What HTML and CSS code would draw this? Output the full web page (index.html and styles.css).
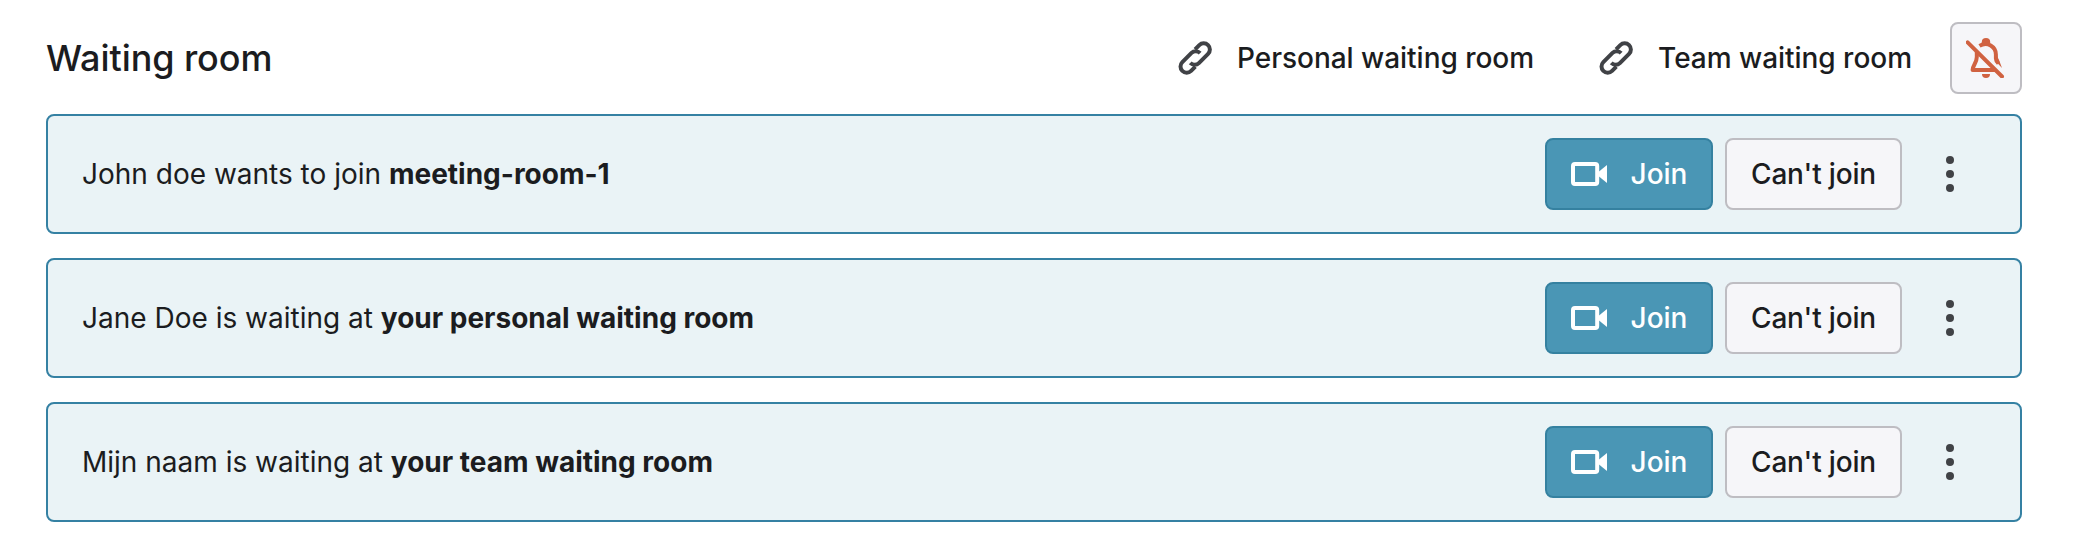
FILE: index.html
```html
<!DOCTYPE html>
<html lang="en">
<head>
  <meta charset="UTF-8">
  <meta name="viewport" content="width=device-width, initial-scale=1.0">
  <title>Waiting room</title>
  <link rel="stylesheet" href="styles.css">
</head>
<body>
  <!-- shared icons -->
  <svg class="sprite" width="0" height="0">
    <symbol id="link" viewBox="0 0 36 36">
      <g transform="translate(18.2 18) rotate(-45)" fill="none" stroke="currentColor" stroke-width="4">
        <path d="M6 -6.2H12A6.2 6.2 0 0 1 12 6.2H-1A6 6.2 0 0 1 -7 0"/>
        <path d="M-6 6.2H-12A6.2 6.2 0 0 1 -12 -6.2H1A6 6.2 0 0 1 7 0"/>
      </g>
    </symbol>
    <symbol id="video" viewBox="0 0 36 36">
      <rect x="2" y="8" width="24.2" height="20" rx="2" fill="none" stroke="currentColor" stroke-width="4"/>
      <path d="M28 15.5L36 9V27L28 20.5Z" fill="currentColor"/>
    </symbol>
    <symbol id="dots" viewBox="0 0 36 36">
      <circle cx="18" cy="4" r="4"/>
      <circle cx="18" cy="18" r="4"/>
      <circle cx="18" cy="32" r="4"/>
    </symbol>
  </svg>

  <header class="header">
    <h1>Waiting room</h1>
    <div class="actions">
      <button class="btn btn-plain"><svg class="icon icon-dark"><use href="#link"/></svg><span>Personal waiting room</span></button>
      <button class="btn btn-plain"><svg class="icon icon-dark"><use href="#link"/></svg><span>Team waiting room</span></button>
      <button class="btn btn-default btn-square" aria-label="Notifications off">
        <svg class="bell" viewBox="0 0 40 40">
          <path d="M10.8 14V19C10.8 25 6.6 27.5 6.6 31.9H30" fill="none" stroke="currentColor" stroke-width="4" stroke-linejoin="round"/>
          <path d="M13.5 7.9C21.5 3 29.9 9 29.9 16.5V20.5C29.9 22 31 24 32.4 25.5" fill="none" stroke="currentColor" stroke-width="4"/>
          <path d="M28.5 22L36 30L33 22L31 18Z" fill="currentColor"/>
          <path d="M15.8 6V4A4.2 4 0 0 1 24.2 4V6Z" fill="currentColor"/>
          <path d="M16 36H24A4 4 0 0 1 16 36Z" fill="currentColor"/>
          <path d="M3 3.2L37 37.2" stroke="#f6f6f9" stroke-width="4"/>
          <path d="M1.6 4.3L36 38.5" stroke="currentColor" stroke-width="4" stroke-linecap="round"/>
        </svg>
      </button>
    </div>
  </header>

  <main class="list">
    <div class="card">
      <p>John doe wants to join <strong>meeting-room-1</strong></p>
      <div class="actions">
        <button class="btn btn-primary"><svg class="icon"><use href="#video"/></svg><span>Join</span></button>
        <button class="btn btn-default btn-decline">Can't join</button>
        <button class="btn btn-plain btn-square" aria-label="More"><svg class="icon icon-dark"><use href="#dots"/></svg></button>
      </div>
    </div>
    <div class="card">
      <p>Jane Doe is waiting at <strong>your personal waiting room</strong></p>
      <div class="actions">
        <button class="btn btn-primary"><svg class="icon"><use href="#video"/></svg><span>Join</span></button>
        <button class="btn btn-default btn-decline">Can't join</button>
        <button class="btn btn-plain btn-square" aria-label="More"><svg class="icon icon-dark"><use href="#dots"/></svg></button>
      </div>
    </div>
    <div class="card">
      <p>Mijn naam is waiting at <strong>your team waiting room</strong></p>
      <div class="actions">
        <button class="btn btn-primary"><svg class="icon"><use href="#video"/></svg><span>Join</span></button>
        <button class="btn btn-default btn-decline">Can't join</button>
        <button class="btn btn-plain btn-square" aria-label="More"><svg class="icon icon-dark"><use href="#dots"/></svg></button>
      </div>
    </div>
  </main>
</body>
</html>
```
FILE: styles.css
```css
* {
  box-sizing: border-box;
}
body {
  margin: 0;
  padding: 22px 56px 36px 46px;
  background: #fff;
  color: #1b1c20;
  font-family: Inter, sans-serif;
  font-size: 28px;
}
.sprite {
  display: block;
}
.header {
  display: flex;
  align-items: center;
  justify-content: space-between;
  margin-bottom: 20px;
}
h1 {
  margin: 0;
  font-size: 36px;
  font-weight: 500;
  letter-spacing: -0.08px;
}
.actions {
  display: flex;
  gap: 12px;
}
.list {
  display: flex;
  flex-direction: column;
  gap: 24px;
}
.card {
  display: flex;
  align-items: center;
  justify-content: space-between;
  height: 120px;
  padding: 0 34px;
  background: #eaf3f6;
  border: 2px solid #3581a3;
  border-radius: 8px;
}
.card p {
  margin: 0;
}
.card strong {
  font-weight: 700;
}
.btn {
  display: flex;
  align-items: center;
  justify-content: center;
  gap: 24px;
  height: 72px;
  padding: 0 24px;
  border: 2px solid transparent;
  border-radius: 8px;
  background: none;
  color: inherit;
  font: inherit;
  font-weight: 500;
  letter-spacing: -0.03px;
  white-space: nowrap;
}
.btn-square {
  width: 72px;
  padding: 0;
}
.btn-default {
  background: #f6f6f9;
  border-color: #bebdc2;
}
.btn-decline {
  width: 177px;
  letter-spacing: -0.18px;
}
.btn-primary {
  width: 168px;
  background: #4a96b5;
  border-color: #3581a0;
  color: #fff;
}
.icon {
  flex: none;
  width: 36px;
  height: 36px;
  fill: currentColor;
}
.icon-dark {
  color: #404246;
}
.bell {
  flex: none;
  width: 40px;
  height: 40px;
  color: #d06241;
}
```
